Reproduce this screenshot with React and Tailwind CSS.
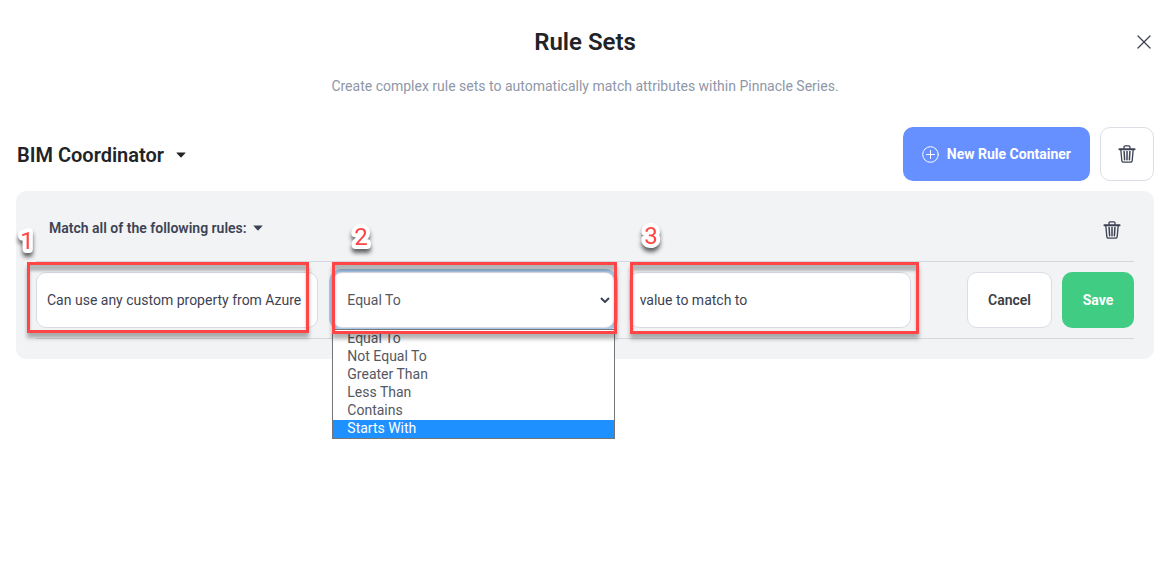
import { useState } from "react";

const operators = [
  "Equal To",
  "Not Equal To",
  "Greater Than",
  "Less Than",
  "Contains",
  "Starts With",
];

function TrashIcon() {
  return (
    <svg
      width="18"
      height="20"
      viewBox="0 0 18 20"
      fill="none"
      stroke="currentColor"
      strokeWidth="1.3"
      strokeLinecap="round"
      strokeLinejoin="round"
      aria-hidden="true"
    >
      <path d="M1.4 5.2h15.2" strokeWidth="1.9" />
      <path d="M6 4.6V3Q6 1.8 7.2 1.8h3.6Q12 1.8 12 3v1.6" />
      <path d="M2.8 5.4 3.8 16.6Q4 18.2 5.6 18.2h6.8q1.6 0 1.8-1.6L15.2 5.4" />
      <path d="M6.1 7.4 6.6 15.8M9 7.4v8.4M11.9 7.4l-.5 8.4" strokeWidth="1.5" />
    </svg>
  );
}

function PlusCircleIcon() {
  return (
    <svg width="17" height="17" viewBox="0 0 17 17" fill="none" stroke="currentColor" strokeLinecap="round" aria-hidden="true">
      <circle cx="8.5" cy="8.5" r="7.8" />
      <path d="M8.5 4.5v8M4.5 8.5h8" />
    </svg>
  );
}

function CloseIcon() {
  return (
    <svg width="14" height="14" viewBox="0 0 14 14" stroke="currentColor" strokeWidth="1.3" strokeLinecap="round" aria-hidden="true">
      <path d="M1 1l12 12M13 1 1 13" />
    </svg>
  );
}

function Caret() {
  return (
    <svg width="10" height="6" viewBox="0 0 10 6" fill="currentColor" aria-hidden="true">
      <path d="M.8.5h8.4q.7 0 .2.6L5.5 5.2q-.5.4-1 0L.6 1.1Q.1.5.8.5z" />
    </svg>
  );
}

// numbered callout: red frame round a field with its step number above
function Callout({ step, frame, label }) {
  return (
    <>
      <div
        className={`pointer-events-none absolute z-20 border-3 border-[#ff4545] shadow-[0_5px_4px_rgba(0,0,0,0.3),inset_0_6px_3px_rgba(0,0,0,0.25)] ${frame}`}
      />
      <svg
        width="22"
        height="24"
        className={`pointer-events-none absolute z-20 overflow-visible text-2xl drop-shadow-[0_4px_2px_rgba(0,0,0,0.6)] ${label}`}
      >
        <text
          x="11"
          y="21"
          textAnchor="middle"
          fill="#ff4545"
          stroke="white"
          strokeWidth="8"
          strokeLinejoin="round"
          paintOrder="stroke"
        >
          {step}
        </text>
      </svg>
    </>
  );
}

export default function App() {
  const [property, setProperty] = useState("Can use any custom property from Azure");
  const [operator, setOperator] = useState("Equal To");
  const [value, setValue] = useState("value to match to");
  const [highlighted, setHighlighted] = useState("Starts With");

  const field = "h-14 w-full rounded-[10px] border border-[#d8dbe2] bg-white text-sm outline-none";

  return (
    <main className="relative min-h-screen bg-white pt-6 pr-[22px] pb-6 pl-4 font-['Roboto',sans-serif] text-sm text-[#3d4354]">
      <header className="text-center">
        <h1 className="text-2xl leading-9 font-semibold text-[#212327]">Rule Sets</h1>
        <p className="mt-4 leading-5 text-[#8e97a8]">
          Create complex rule sets to automatically match attributes within Pinnacle Series.
        </p>
        <button type="button" aria-label="Close" className="absolute top-7 right-[18px] flex size-7 items-center justify-center">
          <CloseIcon />
        </button>
      </header>

      <div className="mt-[31px] flex items-center justify-between">
        <button type="button" className="flex items-center gap-3 pt-[2px] pl-px text-xl font-semibold text-[#212327]">
          BIM Coordinator
          <Caret />
        </button>
        <div className="flex gap-[10px]">
          <button
            type="button"
            className="flex h-[54px] items-center gap-2 rounded-[10px] bg-[#6690ff] px-[19px] font-bold text-white"
          >
            <PlusCircleIcon />
            New Rule Container
          </button>
          <button
            type="button"
            aria-label="Delete rule set"
            className="flex size-[54px] items-center justify-center rounded-[10px] border border-[#dcdee5]"
          >
            <TrashIcon />
          </button>
        </div>
      </div>

      <section className="mt-[10px] rounded-[10px] bg-[#f2f3f5] px-5 pb-5">
        <div className="flex h-[70px] items-center justify-between pt-2 pr-[13px] pl-[13px]">
          <button type="button" className="mb-1 flex items-center gap-[6px] font-semibold">
            Match all of the following rules:
            <Caret />
          </button>
          <button type="button" aria-label="Delete rule container">
            <TrashIcon />
          </button>
        </div>

        <div className="flex items-center gap-14 border-y border-[#d5d7dc] py-[10px]">
          <div className="grid flex-1 grid-cols-3 gap-[14px]">
            <div className="relative">
              <input
                aria-label="Property"
                value={property}
                onChange={(e) => setProperty(e.target.value)}
                className={`${field} px-[10px]`}
              />
              <Callout step={1} frame="-top-[10px] -bottom-[5px] right-[9px] -left-[9px]" label="-left-[20px] -top-[44px]" />
            </div>

            <div className="relative">
              <select
                aria-label="Operator"
                value={operator}
                onChange={(e) => setOperator(e.target.value)}
                className={`${field} appearance-none pl-[14px] text-[#54585f] shadow-[0_0_0_3px_#a9c9ea]`}
              >
                {operators.map((op) => (
                  <option key={op}>{op}</option>
                ))}
              </select>
              <svg
                width="10"
                height="6"
                viewBox="0 0 10 6"
                fill="none"
                stroke="currentColor"
                strokeWidth="2"
                className="pointer-events-none absolute top-[25px] right-[5px]"
                aria-hidden="true"
              >
                <path d="M1 1l4 4 4-4" />
              </svg>
              <ul
                role="listbox"
                aria-label="Operators"
                className="absolute inset-x-0 top-[57px] z-10 border border-[#767676] bg-white leading-4 text-[#54585f]"
              >
                {operators.map((op) => (
                  <li
                    key={op}
                    role="option"
                    aria-selected={op === highlighted}
                    onMouseEnter={() => setHighlighted(op)}
                    onClick={() => setOperator(op)}
                    className={`pb-[2px] pl-[14px] ${op === highlighted ? "bg-[#1e90ff] text-white" : ""}`}
                  >
                    {op}
                  </li>
                ))}
              </ul>
              <Callout step={2} frame="-top-[10px] -bottom-[6px] -right-[2px] left-0" label="left-[18px] -top-[48px]" />
            </div>

            <div className="relative">
              <input
                aria-label="Value"
                value={value}
                onChange={(e) => setValue(e.target.value)}
                className={`${field} px-[10px]`}
              />
              <Callout step={3} frame="-top-[10px] -bottom-[6px] -right-[8px] left-px" label="left-[11px] -top-[49px]" />
            </div>
          </div>

          <div className="flex gap-[10px]">
            <button
              type="button"
              className="h-14 w-[85px] rounded-[10px] border border-[#dcdee5] bg-white font-semibold text-[#3b3d42]"
            >
              Cancel
            </button>
            <button type="button" className="h-14 w-[72px] rounded-[10px] bg-[#41cc83] font-bold text-white">
              Save
            </button>
          </div>
        </div>
      </section>
    </main>
  );
}
